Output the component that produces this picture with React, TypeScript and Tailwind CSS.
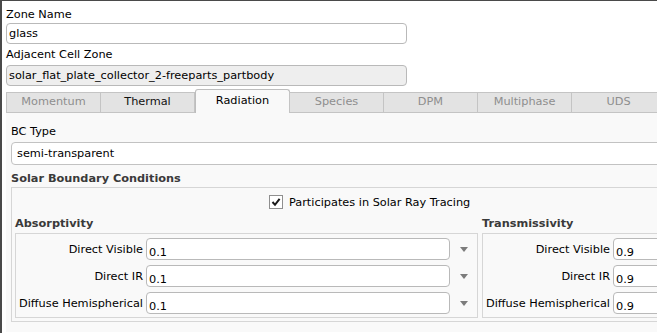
import React from "react";

type Tab = { label: string; state: "off" | "on" | "active" };

const tabs: Tab[] = [
  { label: "Momentum", state: "off" },
  { label: "Thermal", state: "on" },
  { label: "Radiation", state: "active" },
  { label: "Species", state: "off" },
  { label: "DPM", state: "off" },
  { label: "Multiphase", state: "off" },
  { label: "UDS", state: "off" },
];

const rows = ["Direct Visible", "Direct IR", "Diffuse Hemispherical"];

// small grey down-pointing triangle used by Fluent's value menus
const MenuArrow = () => (
  <svg width="8" height="5" viewBox="0 0 8 5" className="block">
    <path d="M0 0 H8 L4 5 Z" fill="#7c7c7c" />
  </svg>
);

const ValueBox = ({ title, value }: { title: string; value: string }) => (
  <div className="flex flex-col w-[463px] shrink-0">
    <div className="h-[13px] leading-[13px] font-bold text-[#3a3a3a]">{title}</div>
    <div className="mt-[3px] border border-[#d6d6d6] flex flex-col gap-[5px] pt-[4px] pb-[3px]">
      {rows.map((r) => (
        <div key={r} className="flex items-center h-[22px]">
          <div className="w-[127px] shrink-0 text-right leading-[13px] whitespace-nowrap">{r}</div>
          <div className="ml-[3px] w-[304px] h-[22px] bg-white border border-[#b9b9b9] rounded-[4px] pl-[2px] pt-[7px] leading-[13px]">
            {value}
          </div>
          <div className="w-[27px] flex justify-center">
            <MenuArrow />
          </div>
        </div>
      ))}
    </div>
  </div>
);

export default function App() {
  return (
    <div className="w-[657px] h-[333px] overflow-hidden bg-white border-t border-l-2 border-[#4a4a4a] font-['DejaVu_Sans',sans-serif] text-[11.3px] text-black">
      <div className="w-[1000px]">
        {/* zone fields */}
        <div className="pl-[4px] pt-[7px]">
          <div className="h-[13px] leading-[13px]">Zone Name</div>
          <div className="mt-[2px] w-[401px] h-[21px] bg-white border border-[#b9b9b9] rounded-[4px] pl-[2px] flex items-center leading-[13px]">
            glass
          </div>
          <div className="mt-[4px] h-[13px] leading-[13px]">Adjacent Cell Zone</div>
          <div className="mt-[4px] w-[401px] h-[21px] bg-[#eeeeee] border border-[#b9b9b9] rounded-[4px] pl-[2px] flex items-center leading-[13px]">
            solar_flat_plate_collector_2-freeparts_partbody
          </div>
        </div>

        {/* tab strip */}
        <div className="mt-[3px] pl-[4px] flex items-end h-[24px]">
          {tabs.map((t) =>
            t.state === "active" ? (
              <div
                key={t.label}
                className="w-[95px] h-[24px] bg-[#f9f9f9] border border-b-0 border-[#bdbdbd] rounded-t-[3px] flex items-center justify-center pb-[1px]"
              >
                {t.label}
              </div>
            ) : (
              <div
                key={t.label}
                className={`w-[95px] h-[21px] bg-[#e3e3e3] border border-[#c4c4c4] -ml-px first:ml-0 flex items-center justify-center ${
                  t.state === "off" ? "text-[#8e8e8e]" : "text-[#111]"
                }`}
              >
                {t.label}
              </div>
            )
          )}
          <div className="flex-1 h-[21px] bg-[#e3e3e3] border border-[#c4c4c4] -ml-px" />
        </div>

        {/* radiation page */}
        <div className="ml-[4px] bg-[#f9f9f9] pl-[5px] pt-[12px] pb-[10px]">
          <div className="h-[13px] leading-[13px]">BC Type</div>
          <div className="mt-[4px] w-[700px] h-[23px] bg-white border border-[#c2c2c2] rounded-[4px] pl-[5px] flex items-center leading-[13px]">
            semi-transparent
          </div>
          <div className="mt-[7px] h-[13px] leading-[13px] font-bold text-[#3a3a3a]">Solar Boundary Conditions</div>
          <div className="mt-[2px] w-[950px] border border-[#d6d6d6] pl-[3px] pt-[6px] pb-[3px]">
            <div className="ml-[254px] flex items-center h-[15px] gap-[6px]">
              <div className="w-[14px] h-[14px] bg-white border border-[#8f8f8f] flex items-center justify-center">
                <svg width="10" height="10" viewBox="0 0 10 10">
                  <path d="M1.5 5 L4 7.8 L8.6 1.8" fill="none" stroke="#1a1a1a" strokeWidth="2" />
                </svg>
              </div>
              <span className="leading-[13px] pt-[1px]">Participates in Solar Ray Tracing</span>
            </div>
            <div className="mt-[8px] flex gap-[4px]">
              <ValueBox title="Absorptivity" value="0.1" />
              <ValueBox title="Transmissivity" value="0.9" />
            </div>
          </div>
        </div>
      </div>
    </div>
  );
}
